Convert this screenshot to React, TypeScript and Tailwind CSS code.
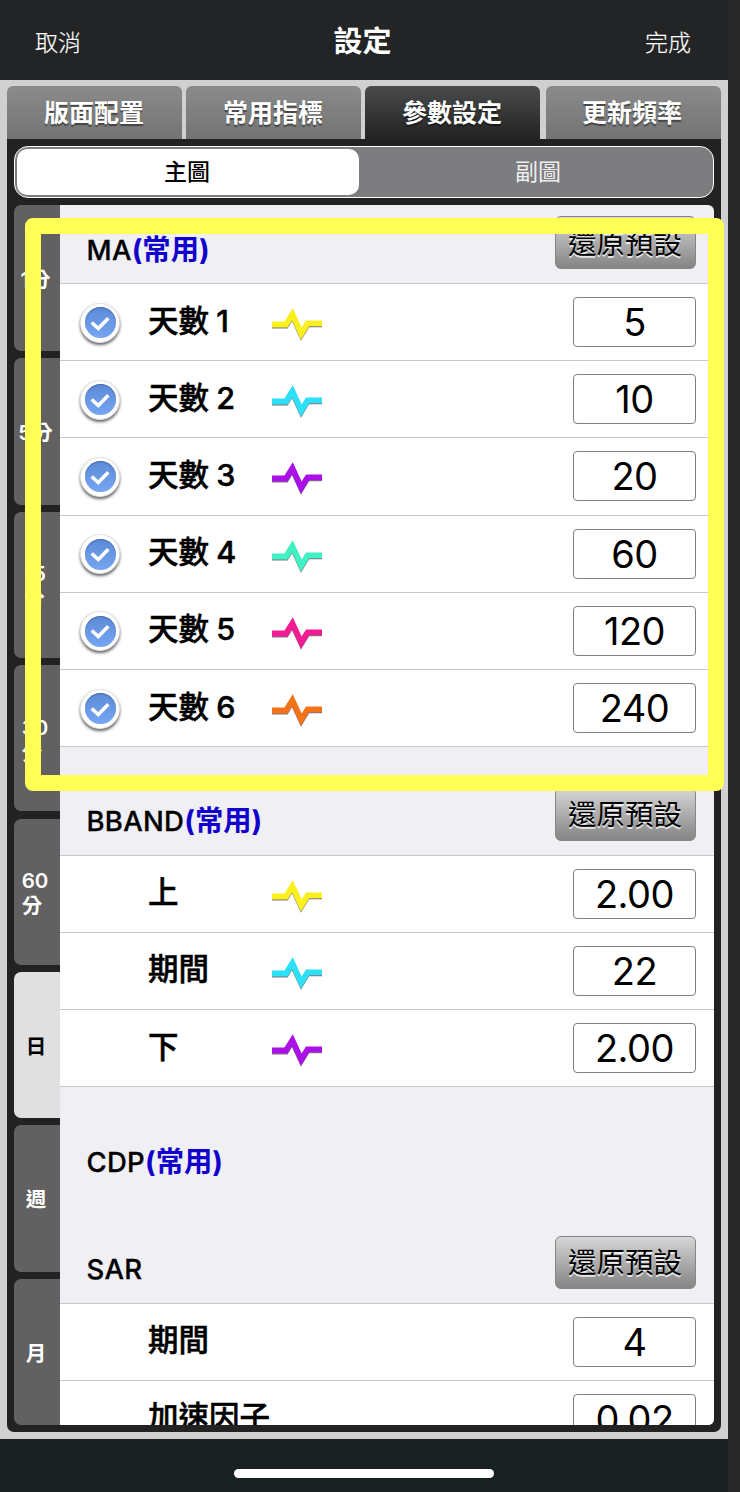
import React from 'react';
import clsx from 'clsx';

type Row = { label: string; value: string; color?: string; checked?: boolean };
type Section = { title: string; common?: boolean; reset?: boolean; header: string; rows: Row[] };

const tabs = ['版面配置', '常用指標', '參數設定', '更新頻率'];

const periods = [
    { lines: ['1分'] },
    { lines: ['5分'] },
    { lines: ['15', '分'] },
    { lines: ['30', '分'] },
    { lines: ['60', '分'] },
    { lines: ['日'], active: true },
    { lines: ['週'] },
    { lines: ['月'] },
];

const sections: Section[] = [
    {
        title: 'MA',
        common: true,
        reset: true,
        header: 'h-[79px]',
        rows: [
            { label: '天數 1', value: '5', color: '#f9f01e', checked: true },
            { label: '天數 2', value: '10', color: '#2be0f7', checked: true },
            { label: '天數 3', value: '20', color: '#ab10e8', checked: true },
            { label: '天數 4', value: '60', color: '#3ff2c4', checked: true },
            { label: '天數 5', value: '120', color: '#f21d93', checked: true },
            { label: '天數 6', value: '240', color: '#f57318', checked: true },
        ],
    },
    {
        title: 'BBAND',
        common: true,
        reset: true,
        header: 'h-[108.5px]',
        rows: [
            { label: '上', value: '2.00', color: '#f9f01e' },
            { label: '期間', value: '22', color: '#2be0f7' },
            { label: '下', value: '2.00', color: '#ab10e8' },
        ],
    },
    { title: 'CDP', common: true, header: 'h-[108px]', rows: [] },
    {
        title: 'SAR',
        reset: true,
        header: 'h-[108.5px] border-b',
        rows: [
            { label: '期間', value: '4' },
            { label: '加速因子', value: '0.02' },
        ],
    },
];

function Check() {
    return (
        <div className="mt-px flex size-[40px] items-center justify-center rounded-full border border-[#e4e4e4] bg-white shadow-[0_2px_3px_rgba(0,0,0,0.6)]">
            <div className="flex size-[31px] items-center justify-center rounded-full bg-gradient-to-b from-[#5b8ad6] to-[#76a5f3] shadow-[inset_0_1px_1px_rgba(40,70,130,0.5)]">
                <svg width="20" height="16" viewBox="0 0 20 16" fill="none" className="mt-0.5">
                    <path d="M1.7 6.5 L8.3 12.5 L18.3 2.3" stroke="#fff" strokeWidth="3.6" />
                </svg>
            </div>
        </div>
    );
}

function Pulse({ color }: { color: string }) {
    return (
        <svg width="54" height="38" viewBox="0 0 54 38" fill="none" className="drop-shadow-[0_1.5px_0.6px_rgba(60,40,60,0.65)]">
            <path d="M2 19.5 H16 L22.4 9.3 L31.3 28.6 L37.6 18.3 H52" stroke={color} strokeWidth="5.8" strokeMiterlimit="10" />
        </svg>
    );
}

function ResetButton() {
    return (
        <button className="mb-[14px] flex h-[53px] w-[141px] items-center justify-center rounded-[6px] border border-[#858585] bg-gradient-to-b from-[#d6d6d6] to-[#858585] pt-[3px] pr-px text-[28.5px] leading-none text-black [text-shadow:0_1.5px_0_rgba(255,255,255,0.75)]">
            還原預設
        </button>
    );
}

function SectionBlock({ title, common, reset, header, rows }: Section) {
    return (
        <section className="shrink-0">
            <div className={clsx('flex items-end justify-between pr-[18px] pl-[26.5px] border-[#c8c7cc]', rows.length > 0 && 'border-b', header)}>
                <h2 className="mb-[17.5px] text-[27.5px] leading-[32px] font-medium whitespace-nowrap text-black [-webkit-text-stroke:0.3px]">
                    <span className="tracking-[0.3px]">{title}</span>
                    {common && <span className="text-[28.3px] font-bold text-[#1200cc] [-webkit-text-stroke:0px]">(常用)</span>}
                </h2>
                {reset && <ResetButton />}
            </div>
            {rows.map((row) => (
                <div key={row.label} className="flex h-[77.2px] items-center border-b border-[#c8c7cc] bg-white pr-[18px] pl-[20px]">
                    <div className="w-[68px]">{row.checked && <Check />}</div>
                    <div className="w-[121.5px] pb-[3px] text-[30.5px] leading-10 font-medium whitespace-nowrap text-black [-webkit-text-stroke:0.5px] [word-spacing:-1px]">
                        {row.label}
                    </div>
                    <div className="pt-1">{row.color && <Pulse color={row.color} />}</div>
                    <div className="ml-auto flex h-[50px] w-[123px] items-center justify-center rounded-[4px] border border-[#808080] bg-white text-[38px] leading-none tracking-[-0.5px] text-black">
                        {row.value}
                    </div>
                </div>
            ))}
        </section>
    );
}

export default function App() {
    return (
        <div className="flex h-[1492px] w-[740px] overflow-hidden bg-[#282828] font-['Inter','Noto_Sans_CJK_TC',sans-serif]">
            <div className="relative flex w-[728px] flex-col bg-[#182022]">
                <header className="flex h-20 items-center justify-between bg-[#222426] px-[35px] text-white">
                    <span className="pt-[7px] text-[23px] font-light [-webkit-text-stroke:0.2px]">取消</span>
                    <h1 className="pt-[3px] pr-px text-[29px] font-bold">設定</h1>
                    <span className="pt-[7px] pr-0.5 text-[23px] font-light [-webkit-text-stroke:0.2px]">完成</span>
                </header>

                <main className="flex h-[1359px] flex-col bg-[#d0d0d0] px-[7px] pt-1.5">
                    <nav className="flex h-[53px] gap-1">
                        {tabs.map((tab) => (
                            <div
                                key={tab}
                                className={clsx(
                                    'flex w-[175px] items-center justify-center rounded-t-[6px] bg-gradient-to-b pt-0.5 pr-px text-[25px] font-bold text-white [text-shadow:0_2px_1px_rgba(0,0,0,0.45)] last:ml-auto last:pr-[3px]',
                                    tab === '參數設定' ? 'from-[#4a4b4b] to-[#232323]' : 'from-[#8a8b8a] to-[#737373]',
                                )}
                            >
                                {tab}
                            </div>
                        ))}
                    </nav>

                    <div className="flex h-[1293px] flex-col gap-[7px] rounded-b-[7px] bg-[#222] p-[7px]">
                        <div className="flex h-[52px] shrink-0 rounded-[14px] border-[1.5px] border-white bg-[#7d7d7f] p-0.5 text-[23px]">
                            <div className="flex w-[342px] items-center justify-center rounded-[10px] bg-white pr-0.5 font-medium text-black">
                                主圖
                            </div>
                            <div className="flex flex-1 items-center justify-center pl-[6px] text-[#eee]">副圖</div>
                        </div>

                        <div className="flex min-h-0 flex-1">
                            <aside className="flex w-[46px] flex-col gap-[7.3px]">
                                {periods.map(({ lines, active }) => (
                                    <div
                                        key={lines.join('')}
                                        className={clsx(
                                            'flex flex-1 items-center justify-center rounded-l-[7px] pt-[3px] text-[20.5px] leading-[25px] font-semibold',
                                            lines.length > 1 ? 'pr-1' : 'pr-0.5',
                                            lines[0].length === 2 && lines.length === 1 && 'tracking-[1px]',
                                            active ? 'bg-[#e0e0e0] text-black' : 'bg-[#616161] text-white',
                                        )}
                                    >
                                        <div className="whitespace-nowrap">
                                            {lines.map((line) => (
                                                <div key={line}>{line}</div>
                                            ))}
                                        </div>
                                    </div>
                                ))}
                            </aside>
                            <div className="flex flex-1 flex-col overflow-hidden rounded-r-[6px] bg-[#efeff4]">
                                {sections.map((section) => (
                                    <SectionBlock key={section.title} {...section} />
                                ))}
                            </div>
                        </div>
                    </div>
                </main>

                <footer className="flex flex-1 justify-center pt-[30px]">
                    <div className="h-[9px] w-[260px] rounded-full bg-white" />
                </footer>

                {/* highlight frame drawn over the MA section */}
                <div className="absolute top-[218px] left-[25px] h-[572.5px] w-[699px] rounded-[8px] border-[16.5px] border-[#ffff55]" />
            </div>
        </div>
    );
}
